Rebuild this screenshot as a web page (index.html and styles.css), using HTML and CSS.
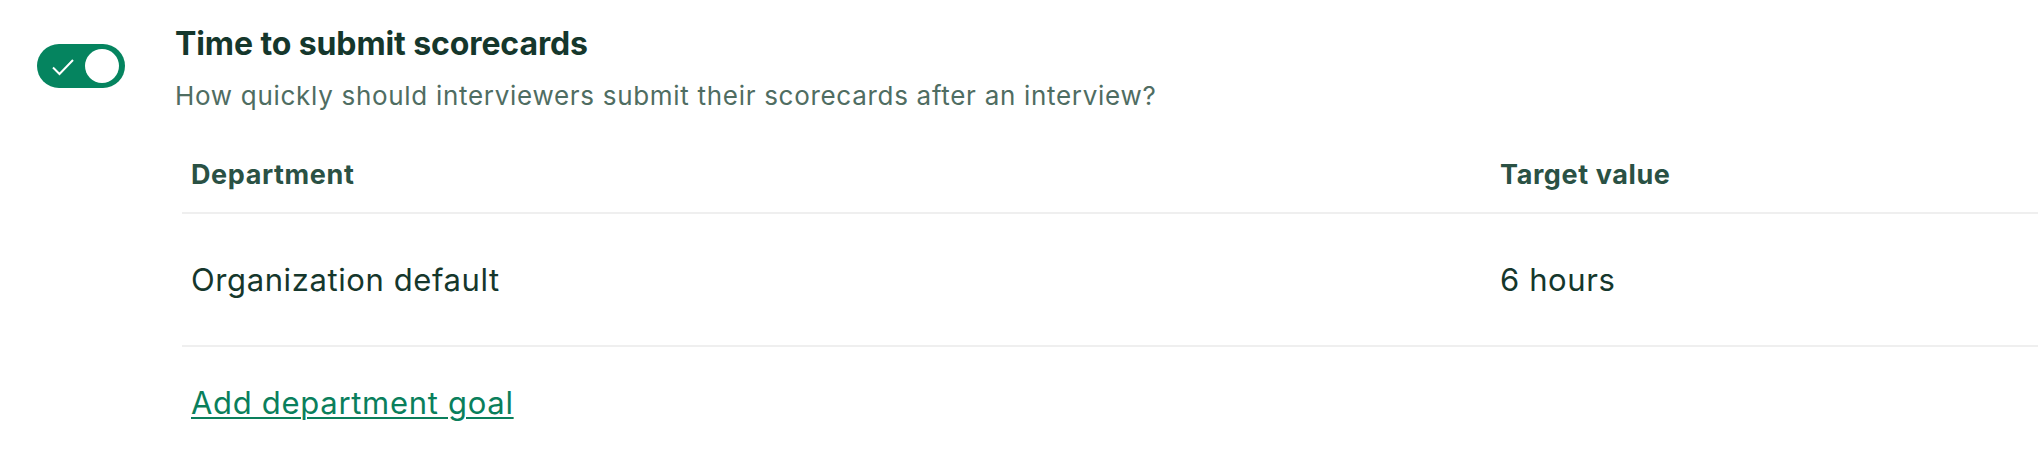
FILE: index.html
```html
<!DOCTYPE html>
<html lang="en">
<head>
    <meta charset="UTF-8">
    <meta name="viewport" content="width=device-width, initial-scale=1.0">
    <title>Scorecard goals</title>
    <link rel="stylesheet" href="styles.css">
</head>
<body>
    <div class="goal">
        <button class="toggle is-on" type="button" aria-pressed="true" aria-label="Time to submit scorecards">
            <svg class="toggle-check" width="24" height="18" viewBox="0 0 24 18">
                <path d="M2 9.5 L8.5 16 L22 2" fill="none" stroke="#fff" stroke-width="2"/>
            </svg>
            <span class="toggle-knob"></span>
        </button>

        <div class="goal-body">
            <h2 class="goal-title">Time to submit scorecards</h2>
            <p class="goal-desc">How quickly should interviewers submit their scorecards after an interview?</p>

            <div class="goal-table">
                <div class="goal-row goal-head">
                    <div class="cell">Department</div>
                    <div class="cell">Target value</div>
                </div>
                <div class="goal-row">
                    <div class="cell">Organization default</div>
                    <div class="cell">6 hours</div>
                </div>
            </div>

            <a class="goal-add" href="#">Add department goal</a>
        </div>
    </div>
</body>
</html>
```

FILE: styles.css
```css
body {
    font-family: Inter, "Liberation Sans", sans-serif;
    margin: 0;
    padding: 0;
    background-color: #fff;
    color: #15372c;
}
.goal {
    display: flex;
    align-items: flex-start;
    gap: 50px;
    padding: 24px 0 0 37px;
}
.toggle {
    position: relative;
    flex: none;
    width: 88px;
    height: 44px;
    margin-top: 20px;
    padding: 0;
    border: none;
    border-radius: 22px;
    background-color: #05845f;
    cursor: pointer;
}
.toggle-check {
    position: absolute;
    left: 14px;
    top: 14px;
}
.toggle-knob {
    position: absolute;
    right: 6px;
    top: 5px;
    width: 34px;
    height: 34px;
    border-radius: 50%;
    background-color: #fff;
}
.goal-body {
    flex: 1;
    min-width: 0;
}
.goal-title {
    margin: 0;
    font-size: 32px;
    font-weight: 700;
    line-height: 40px;
    letter-spacing: -0.1px;
    color: #15372c;
}
.goal-desc {
    margin: 15px 0 0;
    font-size: 26px;
    line-height: 34px;
    letter-spacing: 0.7px;
    color: #4f6d62;
}
.goal-table {
    margin: 25px 0 0 7px;
}
.goal-row {
    display: grid;
    grid-template-columns: 1309px 1fr;
    border-bottom: 2px solid #efefef;
}
.goal-row .cell {
    padding: 0 9px;
    font-size: 31px;
    line-height: 131px;
    letter-spacing: 0.6px;
}
.goal-head .cell {
    font-size: 27px;
    font-weight: 700;
    line-height: 74px;
    letter-spacing: 0.6px;
    color: #2a5144;
}
.goal-add {
    display: inline-block;
    margin: 36px 0 0 16px;
    font-size: 31px;
    line-height: 40px;
    letter-spacing: 0.7px;
    color: #0a7f5c;
    text-decoration-thickness: 2px;
    text-underline-offset: 3px;
}
```
